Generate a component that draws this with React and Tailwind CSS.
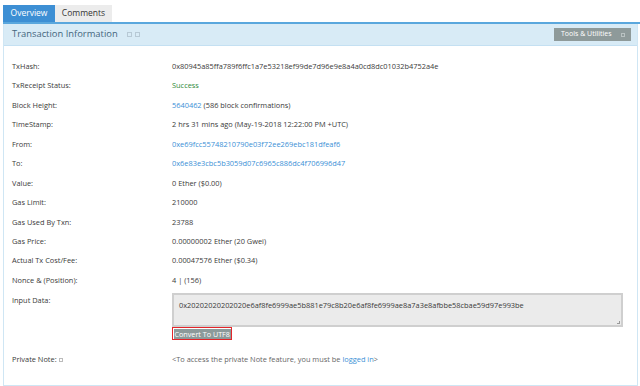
import React from "react";

const rows = [
  ["TxHash:", <span>0x80945a85ffa789f6ffc1a7e53218ef99de7d96e9e8a4a0cd8dc01032b4752a4e</span>],
  ["TxReceipt Status:", <span className="text-[#2f8a3a]">Success</span>],
  ["Block Height:", <span><span className="text-[#3a8fd6]">5640462</span> (586 block confirmations)</span>],
  ["TimeStamp:", <span>2 hrs 31 mins ago (May-19-2018 12:22:00 PM +UTC)</span>],
  ["From:", <span className="text-[#3a8fd6]">0xe69fcc55748210790e03f72ee269ebc181dfeaf6</span>],
  ["To:", <span className="text-[#3a8fd6]">0x6e83e3cbc5b3059d07c6965c886dc4f706996d47</span>],
  ["Value:", <span>0 Ether ($0.00)</span>],
  ["Gas Limit:", <span>210000</span>],
  ["Gas Used By Txn:", <span>23788</span>],
  ["Gas Price:", <span>0.00000002 Ether (20 Gwei)</span>],
  ["Actual Tx Cost/Fee:", <span>0.00047576 Ether ($0.34)</span>],
  ["Nonce & (Position):", <span>4 | (156)</span>],
];

export default function App() {
  return (
    <div className="w-[640px] h-[386px] bg-white overflow-hidden text-[#3a3a3a] text-[7.4px]" style={{ fontFamily: '"Open Sans", "Noto Sans", sans-serif' }}>
      <div className="pl-[3px] pt-[5px] flex h-[22px]">
        <div className="w-[52px] bg-[#3d8fd4] text-white text-[8.5px] flex items-center justify-center">Overview</div>
        <div className="w-[57px] bg-[#ececec] text-[#333] text-[8.5px] flex items-center justify-center">Comments</div>
      </div>
      <div className="ml-[3px] h-[2px] bg-[#5aa7dd]" />
      <div className="ml-[3px] mr-[2px] border-x border-b border-[#cfe6f4] h-[362px] flex flex-col">
        <div className="h-[22px] bg-[#d8ebf6] border-b border-[#c4e0f2] flex items-center pl-[8px] pr-[6px]">
          <span className="text-[9.4px] text-[#45667d]">Transaction Information</span>
          <span className="ml-[9px] flex gap-[3px]">
            <span className="w-[5px] h-[5px] border border-[#b7c9d5]" />
            <span className="w-[5px] h-[5px] border border-[#b7c9d5]" />
          </span>
          <div className="ml-auto h-[13px] w-[77px] bg-[#8e9a9a] text-white text-[7px] flex items-center pl-[7px]">
            Tools &amp; Utilities
            <span className="ml-auto mr-[6px] w-[4px] h-[4px] border border-[#b9c2c2]" />
          </div>
        </div>
        <div className="pl-[8px] pt-[15px]">
          {rows.map(([l, v], i) => (
            <div key={i} className="flex h-[19.45px] items-start">
              <div className="w-[160px]">{l}</div>
              <div>{v}</div>
            </div>
          ))}
          <div className="flex mt-[-1px]">
            <div className="w-[160px] pt-[2px]">Input Data:</div>
            <div className="flex flex-col items-start">
              <div className="w-[451px] h-[34px] bg-[#ebebeb] border-2 border-[#cfcfcf] pl-[5px] pt-[5px] relative">
                0x20202020202020e6af8fe6999ae5b881e79c8b20e6af8fe6999ae8a7a3e8afbbe58cbae59d97e993be
                <span className="absolute right-[1px] bottom-[1px] w-[3px] h-[3px] border-r border-b border-[#999]" />
              </div>
              <div className="border-[1.5px] border-[#e3262a] p-[0.5px]">
                <div className="bg-[#8c9a9a] text-white text-[7.2px] px-[1px] leading-[10px]">Convert To UTF8</div>
              </div>
            </div>
          </div>
          <div className="flex mt-[14px]">
            <div className="w-[160px] flex items-center gap-[2px]">Private Note: <span className="w-[4px] h-[4px] border border-[#bbb]" /></div>
            <div className="text-[#666]">&lt;To access the private Note feature, you must be <span className="text-[#3a8fd6]">logged in</span>&gt;</div>
          </div>
        </div>
      </div>
    </div>
  );
}
